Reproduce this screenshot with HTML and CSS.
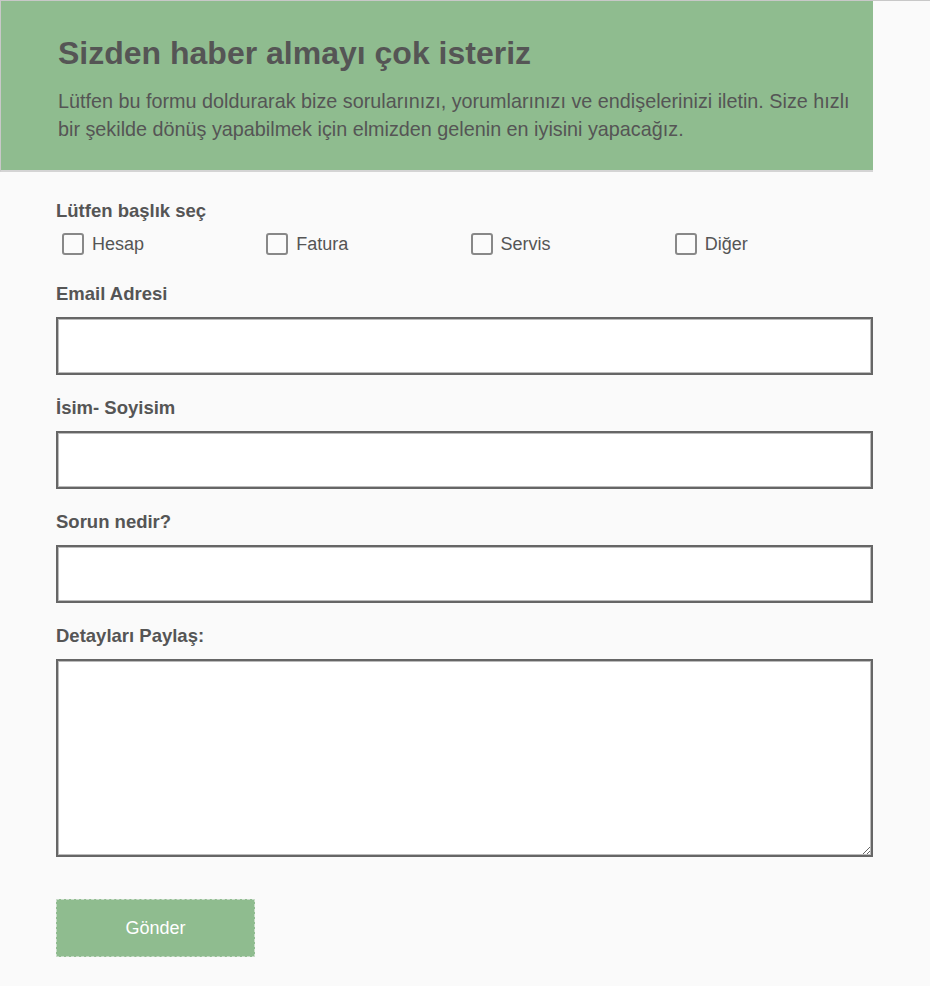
FILE: index.html
```html
<!DOCTYPE html>
<html lang="tr">
<head>
    <meta charset="UTF-8">
    <meta name="viewport" content="width=device-width, initial-scale=1.0">
    <title>İletişim Formu</title>
    <link rel="stylesheet" href="styles.css">
</head>
<body>
    <div class="page">
        <div class="header">
            <h1>Sizden haber almayı çok isteriz</h1>
            <p>Lütfen bu formu doldurarak bize sorularınızı, yorumlarınızı ve endişelerinizi iletin. Size hızlı bir şekilde dönüş yapabilmek için elmizden gelenin en iyisini yapacağız.</p>
        </div>

        <form class="form" onsubmit="return false">
            <label class="label label-topic">Lütfen başlık seç</label>
            <div class="topics">
                <label class="topic"><input type="checkbox"><span class="box"></span>Hesap</label>
                <label class="topic"><input type="checkbox"><span class="box"></span>Fatura</label>
                <label class="topic"><input type="checkbox"><span class="box"></span>Servis</label>
                <label class="topic"><input type="checkbox"><span class="box"></span>Diğer</label>
            </div>

            <div class="field">
                <label class="label" for="email">Email Adresi</label>
                <input type="email" id="email">
            </div>
            <div class="field">
                <label class="label" for="name">İsim- Soyisim</label>
                <input type="text" id="name">
            </div>
            <div class="field">
                <label class="label" for="subject">Sorun nedir?</label>
                <input type="text" id="subject">
            </div>
            <div class="field">
                <label class="label" for="details">Detayları Paylaş:</label>
                <textarea id="details"></textarea>
            </div>

            <button type="submit">Gönder</button>
        </form>
    </div>
</body>
</html>
```

FILE: styles.css
```css
html, body {
    margin: 0;
    padding: 0;
    background-color: #fafafa;
}
body {
    font-family: "Liberation Sans", Arial, sans-serif;
    color: #555;
    border-top: 1px solid #c8c8c8;
}
.page {
    width: 873px;
}
.header {
    background-color: #8fbc8f;
    border-left: 1px solid #c8c8c8;
    border-bottom: 2px solid #d4d4d4;
    padding: 33px 8px 27px 57px;
}
.header h1 {
    margin: 0 0 15px;
    font-size: 32px;
    line-height: 38px;
    color: #555;
}
.header p {
    margin: 0;
    font-size: 19.8px;
    line-height: 28px;
}
.form {
    padding: 28px 0 28px 56px;
}
.label {
    display: block;
    font-size: 18.5px;
    font-weight: bold;
    line-height: 22px;
    margin-bottom: 12px;
}
.label-topic {
    margin-bottom: 10px;
}
.topics {
    display: grid;
    grid-template-columns: repeat(4, 1fr);
    margin-bottom: 27px;
}
.topic {
    display: flex;
    align-items: center;
    gap: 8px;
    font-size: 18px;
    line-height: 24px;
    padding-left: 6px;
    cursor: pointer;
}
.topic input {
    display: none;
}
.box {
    width: 18px;
    height: 18px;
    border: 2px solid #888;
    border-radius: 3px;
    background-color: #fbfbfb;
}
.topic input:checked + .box {
    background-color: #8fbc8f;
}
.field {
    margin-bottom: 22px;
}
input[type="email"],
input[type="text"],
textarea {
    display: block;
    width: 100%;
    height: 58px;
    box-sizing: border-box;
    border: 2px solid #666;
    box-shadow: inset 0 0 0 1px #bbb;
    background-color: #fff;
    font-family: inherit;
    font-size: 17px;
    padding: 0 12px;
    margin: 0;
}
textarea {
    height: 198px;
    padding: 10px 12px;
}
.field:last-of-type {
    margin-bottom: 42px;
}
button {
    width: 199px;
    height: 58px;
    background-color: #8fbc8f;
    border: 1px dashed #c9dcc9;
    color: #fff;
    font-family: inherit;
    font-size: 18px;
    cursor: pointer;
}
button:hover {
    background-color: #82b182;
}
```
